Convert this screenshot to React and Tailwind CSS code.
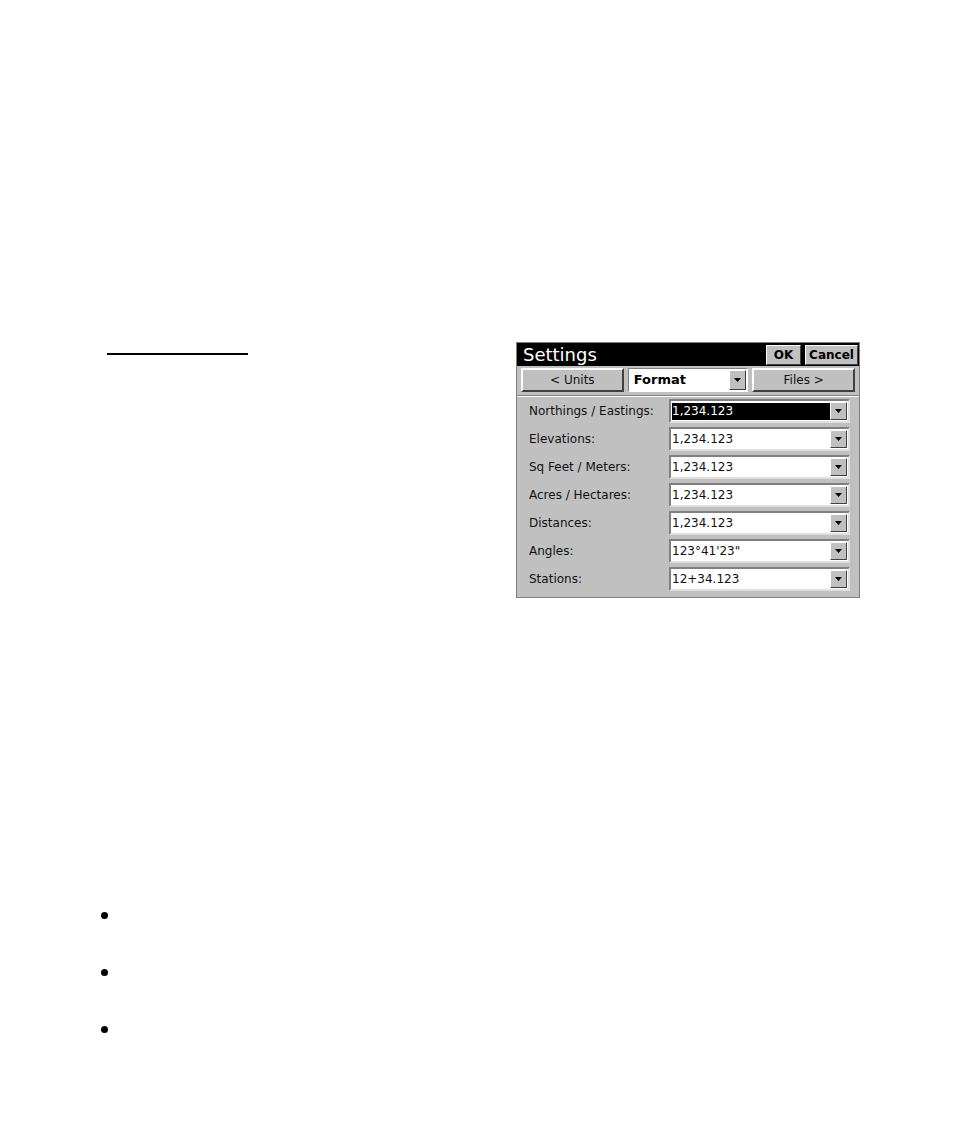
const rows = [
  ["Northings / Eastings:", "1,234.123", true],
  ["Elevations:", "1,234.123"],
  ["Sq Feet / Meters:", "1,234.123"],
  ["Acres / Hectares:", "1,234.123"],
  ["Distances:", "1,234.123"],
  ["Angles:", "123°41'23\""],
  ["Stations:", "12+34.123"],
];

function Arrow() {
  return (
    <div className="w-[17px] h-full bg-[#c0c0c0] border border-t-white border-l-white border-r-[#404040] border-b-[#404040] flex items-center justify-center">
      <svg width="7" height="4" viewBox="0 0 7 4">
        <path d="M0 0h7L3.5 4z" fill="#000" />
      </svg>
    </div>
  );
}

function Btn({ children, className = "" }) {
  return (
    <div className={"bg-[#c0c0c0] border border-t-white border-l-white border-r-[#404040] border-b-[#404040] flex items-center justify-center " + className}>
      {children}
    </div>
  );
}

export default function App() {
  return (
    <div className="w-[954px] h-[1146px] bg-white" style={{ fontFamily: '"DejaVu Sans", Verdana, sans-serif' }}>
      <div className="flex pt-[342px]">
        <div className="w-[516px] pl-[107px] pt-[11px]">
          <div className="w-[141px] h-[2px] bg-black" />
        </div>

        <div className="w-[344px] h-[256px] bg-[#c0c0c0] border border-[#808080] flex flex-col text-[12px] text-[#111]">
          <div className="h-[23px] bg-black flex items-center pl-[6px] pr-[1px] gap-[4px]">
            <span className="text-white text-[18px] leading-none flex-1">Settings</span>
            <Btn className="w-[35px] h-[20px] font-bold text-[12px] text-black">OK</Btn>
            <Btn className="w-[53px] h-[20px] font-bold text-[12px] text-black">Cancel</Btn>
          </div>

          <div className="flex gap-[4px] px-[4px] pt-[2px] h-[27px]">
            <Btn className="w-[103px] h-[24px] border-2 border-t-white border-l-white border-r-[#404040] border-b-[#404040]">&lt; Units</Btn>
            <div className="w-[121px] h-[24px] bg-white border border-t-[#808080] border-l-[#808080] border-r-white border-b-white flex items-center">
              <span className="flex-1 pl-[5px] font-bold text-[13px] text-black">Format</span>
              <div className="h-[20px] mr-[1px]"><Arrow /></div>
            </div>
            <Btn className="w-[103px] h-[24px] border-2 border-t-white border-l-white border-r-[#404040] border-b-[#404040]">Files &gt;</Btn>
          </div>

          <div className="mt-[2px] border-t border-t-[#808080] border-b border-b-white" />

          <div className="flex flex-col">
            {rows.map(([label, value, sel]) => (
              <div key={label} className="flex items-center h-[28px]">
                <div className="w-[152px] pl-[12px]">{label}</div>
                <div className="w-[181px] h-[24px] bg-white border-2 border-t-[#808080] border-l-[#808080] border-r-[#e0e0e0] border-b-[#e0e0e0] flex items-center">
                  <div className="flex-1 pl-[1px] h-full flex items-center">
                    <span className={sel ? "bg-black text-white w-full h-[17px] flex items-center outline outline-1 outline-dotted outline-white" : ""}>{value}</span>
                  </div>
                  <div className="h-full py-[1px] pr-[1px]"><Arrow /></div>
                </div>
              </div>
            ))}
          </div>
        </div>
      </div>

      <ul className="mt-[312px] pl-[101px] flex flex-col gap-[47px]">
        {[0, 1, 2].map((i) => (
          <li key={i} className="h-[10px] flex items-center">
            <span className="w-[7px] h-[7px] rounded-full bg-black" />
          </li>
        ))}
      </ul>
    </div>
  );
}
